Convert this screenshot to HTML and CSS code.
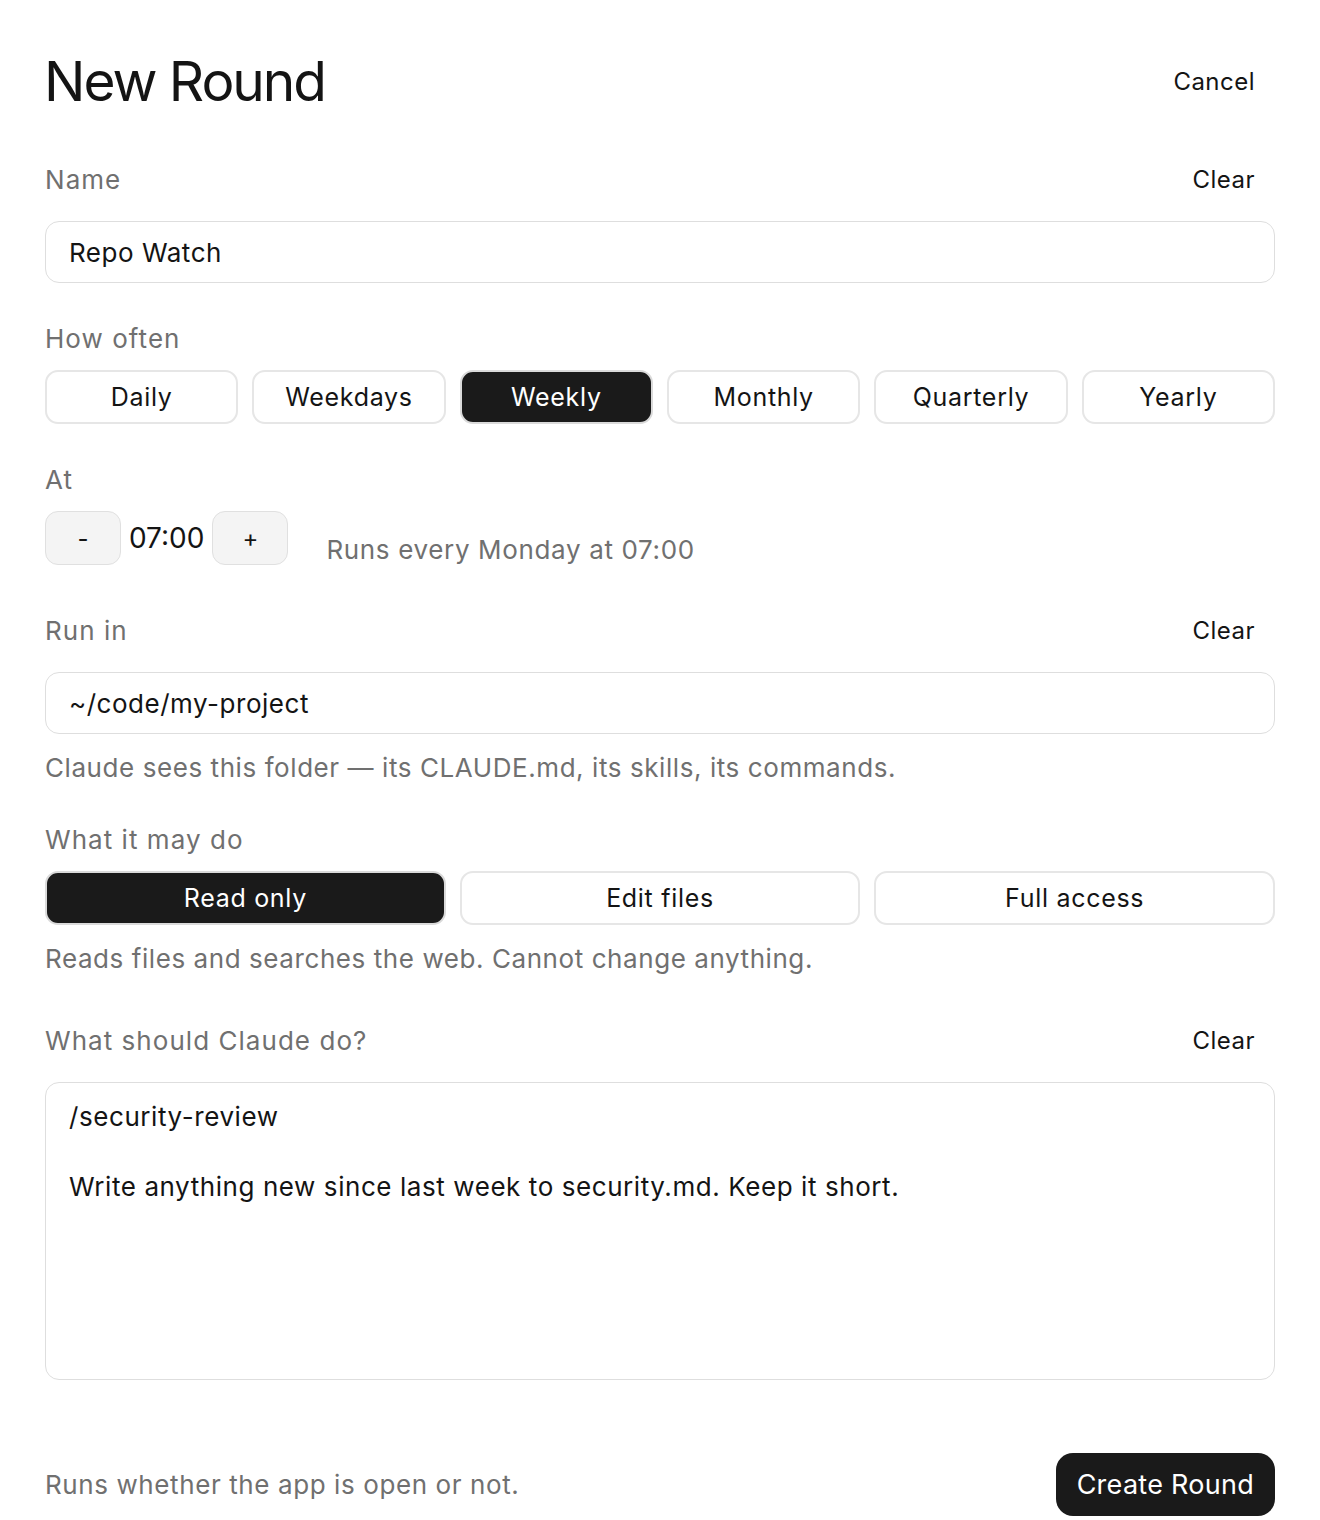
FILE: index.html
```html
<!DOCTYPE html>
<html lang="en">
<head>
    <meta charset="UTF-8">
    <meta name="viewport" content="width=device-width, initial-scale=1.0">
    <title>New Round</title>
    <link rel="stylesheet" href="styles.css">
</head>
<body>
    <div class="sheet">
        <header class="sheet-head">
            <h1>New Round</h1>
            <button class="link-btn cancel">Cancel</button>
        </header>

        <section class="field">
            <div class="field-head tall">
                <label>Name</label>
                <button class="link-btn">Clear</button>
            </div>
            <div class="text-input">Repo Watch</div>
        </section>

        <section class="field">
            <div class="field-head">
                <label>How often</label>
            </div>
            <div class="segments six">
                <button class="seg">Daily</button>
                <button class="seg">Weekdays</button>
                <button class="seg active">Weekly</button>
                <button class="seg">Monthly</button>
                <button class="seg">Quarterly</button>
                <button class="seg">Yearly</button>
            </div>
        </section>

        <section class="field">
            <div class="field-head">
                <label>At</label>
            </div>
            <div class="time-row">
                <div class="stepper">
                    <button class="step">-</button>
                    <span class="time">07:00</span>
                    <button class="step">+</button>
                </div>
                <span class="summary">Runs every Monday at 07:00</span>
            </div>
        </section>

        <section class="field">
            <div class="field-head tall">
                <label>Run in</label>
                <button class="link-btn">Clear</button>
            </div>
            <div class="text-input">~/code/my-project</div>
            <p class="hint">Claude sees this folder — its CLAUDE.md, its skills, its commands.</p>
        </section>

        <section class="field">
            <div class="field-head">
                <label>What it may do</label>
            </div>
            <div class="segments three">
                <button class="seg active">Read only</button>
                <button class="seg">Edit files</button>
                <button class="seg">Full access</button>
            </div>
            <p class="hint">Reads files and searches the web. Cannot change anything.</p>
        </section>

        <section class="field prompt">
            <div class="field-head tall">
                <label>What should Claude do?</label>
                <button class="link-btn">Clear</button>
            </div>
            <div class="text-area">
                <p>/security-review</p>
                <p>Write anything new since last week to security.md. Keep it short.</p>
            </div>
        </section>

        <footer class="sheet-foot">
            <span class="note">Runs whether the app is open or not.</span>
            <button class="primary">Create Round</button>
        </footer>
    </div>
</body>
</html>
```

FILE: styles.css
```css
body {
    margin: 0;
    font-family: Inter, "Noto Sans", sans-serif;
    background: #fff;
    color: #141414;
}
button {
    font-family: inherit;
    cursor: pointer;
}
.sheet {
    padding: 48px 45px 0 45px;
    display: flex;
    flex-direction: column;
}
.sheet-head {
    display: flex;
    align-items: center;
    justify-content: space-between;
    margin-bottom: 37px;
}
.sheet-head h1 {
    margin: 0 0 0 -1px;
    font-size: 55px;
    font-weight: 400;
    letter-spacing: -0.037em;
    line-height: 66px;
}
.link-btn {
    background: none;
    border: none;
    padding: 0 20px 0 0;
    font-size: 24px;
    color: #141414;
    letter-spacing: 0.02em;
}
.field {
    display: flex;
    flex-direction: column;
    margin-bottom: 37px;
}
.field-head {
    display: flex;
    align-items: center;
    justify-content: space-between;
    height: 36px;
    margin-bottom: 14px;
}
/* rows with a Clear action sit in a taller bar */
.field-head.tall {
    height: 56px;
}
.field-head label {
    font-size: 26px;
    color: #707070;
    letter-spacing: 0.04em;
}
.text-input {
    height: 60px;
    border: 1px solid #dedede;
    border-radius: 14px;
    padding: 0 23px;
    display: flex;
    align-items: center;
    font-size: 26px;
    letter-spacing: 0.02em;
}
.hint {
    margin: 18px 0 1px 0;
    font-size: 26px;
    color: #707070;
    letter-spacing: 0.022em;
}
.segments {
    display: grid;
    gap: 14px;
}
.segments.six {
    grid-template-columns: repeat(6, 1fr);
}
.segments.three {
    grid-template-columns: repeat(3, 1fr);
}
.seg {
    height: 54px;
    background: #fff;
    border: 2px solid #e6e6e6;
    border-radius: 13px;
    font-size: 25px;
    color: #141414;
    letter-spacing: 0.028em;
}
.seg.active {
    background: #1a1a1a;
    color: #fff;
    border-color: #dadada;
}
.time-row {
    display: flex;
    align-items: flex-end;
    gap: 38px;
}
.stepper {
    display: flex;
    align-items: center;
    gap: 8px;
}
.step {
    width: 76px;
    height: 54px;
    background: #f4f4f4;
    border: 1px solid #e0e0e0;
    border-radius: 13px;
    font-size: 24px;
    color: #141414;
}
.time {
    font-size: 28px;
    letter-spacing: 0;
}
.summary {
    font-size: 26px;
    color: #707070;
    letter-spacing: 0.025em;
}
.text-area {
    height: 254px;
    border: 1px solid #dedede;
    border-radius: 14px;
    padding: 16px 24px 26px 23px;
    font-size: 26px;
    letter-spacing: 0.022em;
}
.text-area p {
    margin: 0 0 35px 0;
    line-height: 35px;
}
.sheet-foot {
    display: flex;
    align-items: center;
    justify-content: space-between;
    margin-top: 36px;
}
.note {
    font-size: 26px;
    color: #707070;
    letter-spacing: 0.023em;
}
.primary {
    height: 63px;
    padding: 0 21px;
    background: #1a1a1a;
    color: #fff;
    border: none;
    border-radius: 17px;
    font-size: 27px;
    letter-spacing: 0.01em;
}
```
